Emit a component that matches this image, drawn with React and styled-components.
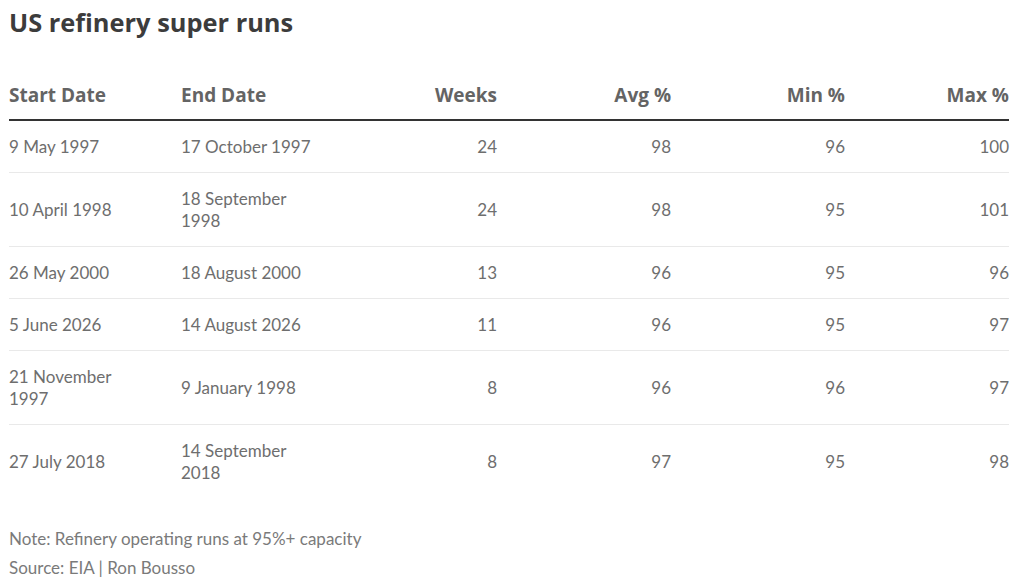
import React from "react";
import styled, { createGlobalStyle } from "styled-components";

const GlobalStyle = createGlobalStyle`
  html, body {
    margin: 0;
    padding: 0;
    background: #fff;
  }
  body {
    font-family: "Lato", "Liberation Sans", sans-serif;
  }
`;

const rows = [
  ["9 May 1997", "17 October 1997", 24, 98, 96, 100],
  ["10 April 1998", "18 September 1998", 24, 98, 95, 101],
  ["26 May 2000", "18 August 2000", 13, 96, 95, 96],
  ["5 June 2026", "14 August 2026", 11, 96, 95, 97],
  ["21 November 1997", "9 January 1998", 8, 96, 96, 97],
  ["27 July 2018", "14 September 2018", 8, 97, 95, 98],
];

const columns = [
  { label: "Start Date", width: 172, align: "left", pad: 40 },
  { label: "End Date", width: 150, align: "left", pad: 10 },
  { label: "Weeks", width: 176, align: "right", pad: 10 },
  { label: "Avg %", width: 174, align: "right", pad: 10 },
  { label: "Min %", width: 174, align: "right", pad: 10 },
  { label: "Max %", width: 154, align: "right", pad: 0 },
];

export default function App() {
  return (
    <>
      <GlobalStyle />
      <Wrapper>
        <Title>US refinery super runs</Title>
        <Table>
          <colgroup>
            {columns.map((c) => (
              <col key={c.label} style={{ width: c.width }} />
            ))}
          </colgroup>
          <thead>
            <tr>
              {columns.map((c) => (
                <Th key={c.label} $align={c.align} $pad={c.pad}>
                  {c.label}
                </Th>
              ))}
            </tr>
          </thead>
          <tbody>
            {rows.map((r, i) => (
              <Row key={i} $last={i === rows.length - 1}>
                {r.map((v, j) => (
                  <Td key={j} $align={columns[j].align} $pad={columns[j].pad}>
                    {v}
                  </Td>
                ))}
              </Row>
            ))}
          </tbody>
        </Table>
        <Footer>
          <p>Note: Refinery operating runs at 95%+ capacity</p>
          <p>Source: EIA | Ron Bousso</p>
        </Footer>
      </Wrapper>
    </>
  );
}

const Wrapper = styled.div`
  width: 1000px;
  padding: 7px 0 0 9px;
`;

const Title = styled.h1`
  margin: 0;
  font-family: "Open Sans", "Liberation Sans", sans-serif;
  font-size: 25.4px;
  font-weight: 700;
  line-height: 30px;
  color: #3c3c3c;
`;

const Table = styled.table`
  width: 1000px;
  margin-top: 46px;
  border-collapse: collapse;
  table-layout: fixed;
`;

const Th = styled.th`
  font-family: "Open Sans", "Liberation Sans", sans-serif;
  font-size: 19px;
  font-weight: 700;
  line-height: 24px;
  color: #646464;
  text-align: ${(p) => p.$align};
  padding: 0 ${(p) => p.$pad}px 12px 0;
  border-bottom: 2px solid #333;
`;

const Row = styled.tr`
  border-bottom: 1px solid ${(p) => (p.$last ? "transparent" : "#e9e9e9")};
`;

const Td = styled.td`
  font-size: 17px;
  line-height: 22px;
  color: #6e6e6e;
  text-align: ${(p) => p.$align};
  padding: 15px ${(p) => p.$pad}px 14px 0;
  vertical-align: middle;
`;

const Footer = styled.div`
  margin-top: 25px;
  font-size: 17px;
  color: #7a7a7a;

  p {
    margin: 0;
    line-height: 29px;
  }
`;
